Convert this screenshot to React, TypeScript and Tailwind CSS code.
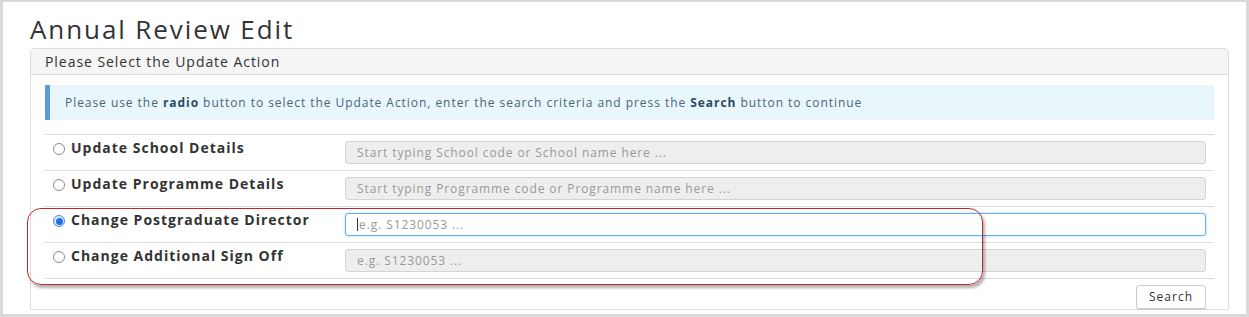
import React from 'react';

type Row = {
  label: string;
  placeholder: string;
  checked?: boolean;
};

const rows: Row[] = [
  { label: 'Update School Details', placeholder: 'Start typing School code or School name here ...' },
  { label: 'Update Programme Details', placeholder: 'Start typing Programme code or Programme name here ...' },
  { label: 'Change Postgraduate Director', placeholder: 'e.g. S1230053 ...', checked: true },
  { label: 'Change Additional Sign Off', placeholder: 'e.g. S1230053 ...' },
];

function Radio({ checked }: { checked?: boolean }) {
  return checked ? (
    <span className="inline-flex h-[12px] w-[12px] items-center justify-center rounded-full border border-[#4a86d8] bg-[#dbe8fa]">
      <span className="h-[7px] w-[7px] rounded-full bg-[#1f6fdc]" />
    </span>
  ) : (
    <span className="inline-block h-[12px] w-[12px] rounded-full border border-[#8a8a8a] bg-white" />
  );
}

export default function App() {
  return (
    <div
      className="relative h-[317px] w-[1249px] overflow-hidden border-x-[3px] border-t-[2px] border-b-[3px] border-[#d9d9d9] bg-white text-[#333]"
      style={{ fontFamily: '"Open Sans", "Liberation Sans", sans-serif' }}
    >
      <div className="pl-[27px] pr-[18px]">
        {/* Page title */}
        <h1 className="pt-[11px] text-[26px] leading-[33px] font-normal tracking-[1.9px] text-[#333]">
          Annual Review Edit
        </h1>

        {/* Panel */}
        <div className="mt-[2px] w-[1199px] rounded-t-[4px] border border-[#ddd]">
          <div className="h-[26px] border-b border-[#ddd] bg-[#f5f5f5] px-[14px] text-[14px] leading-[25px] tracking-[0.95px]">
            Please Select the Update Action
          </div>

          <div className="px-[14px] pt-[10px]">
            {/* Info alert */}
            <div className="flex h-[35px] items-center border-l-[5px] border-[#5b9bd8] bg-[#e9f6fb] pl-[15px] text-[12px] tracking-[0.95px] text-[#4a6676]">
              <span>
                Please use the <b className="text-[#2c4b5d]">radio</b> button to select the Update Action, enter the
                search criteria and press the <b className="text-[#2c4b5d]">Search</b> button to continue
              </span>
            </div>

            {/* Options table */}
            <div className="mt-[14px] border-b border-[#ddd]">
              {rows.map((row) => (
                <div key={row.label} className="flex h-[36px] border-t border-[#ddd]">
                  <div className="flex w-[292px] items-start gap-[6px] pt-[3px] pl-[8px]">
                    <span className="mt-[5px] flex">
                      <Radio checked={row.checked} />
                    </span>
                    <span className="text-[14px] leading-[20px] font-bold tracking-[1px] text-[#333]">{row.label}</span>
                  </div>
                  <div className="flex-1 pt-[6px] pr-[8px] pl-[8px]">
                    <div
                      className={
                        row.checked
                          ? 'flex h-[23px] items-center rounded-[3px] border border-[#66afe9] bg-white pl-[11px] text-[12px] tracking-[0.9px] text-[#999] shadow-[0_0_3px_rgba(102,175,233,0.5)]'
                          : 'flex h-[23px] items-center rounded-[3px] border border-[#d4d4d4] bg-[#eee] pl-[11px] text-[12px] tracking-[0.9px] text-[#999]'
                      }
                    >
                      {row.checked && <span className="mr-[1px] h-[13px] w-px bg-[#333]" />}
                      {row.placeholder}
                    </div>
                  </div>
                </div>
              ))}
            </div>

            <div className="flex justify-end pt-[6px] pr-[8px]">
              <button className="h-[24px] w-[70px] rounded-[3px] border border-[#ccc] bg-white text-[12px] tracking-[1px] text-[#333] shadow-[0_1px_1px_rgba(0,0,0,0.08)]">
                Search
              </button>
            </div>
          </div>
        </div>
      </div>

      {/* Red annotation outline */}
      <div className="pointer-events-none absolute top-[206px] left-[24px] h-[77px] w-[956px] rounded-[14px] border-[1.5px] border-[#c0272d] shadow-[2px_3px_3px_rgba(0,0,0,0.3)]" />
    </div>
  );
}
